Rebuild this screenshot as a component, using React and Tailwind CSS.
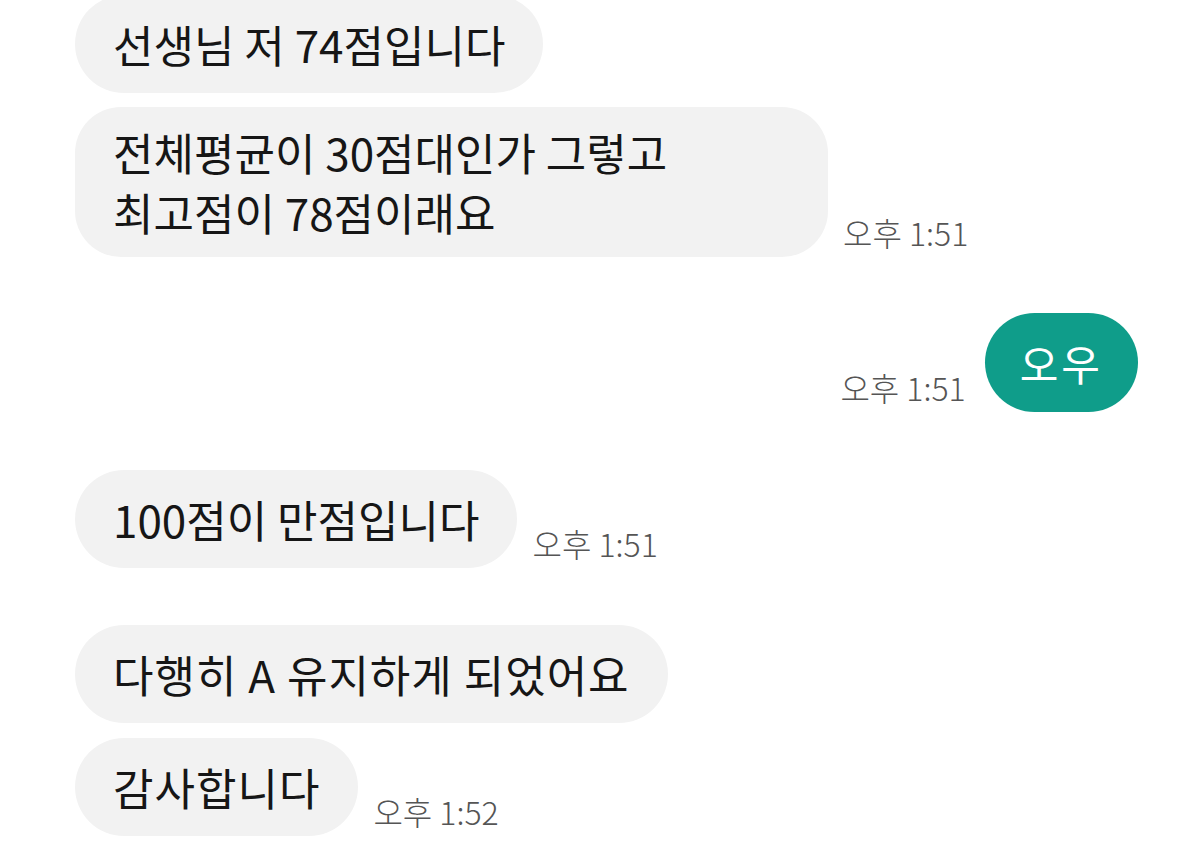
import React from 'react';

const Time = ({ children }) => (
  <span className="mb-[6px] text-[32px] leading-[38px] font-light text-[#555555] whitespace-nowrap">{children}</span>
);

function Bubble({ lines, className = '' }) {
  return (
    <div className={`self-start min-h-[98px] px-[38px] py-[15px] flex flex-col justify-center bg-[#f2f2f2] text-[#161616] text-[44px] leading-[60px] ${className || 'rounded-full'}`}>
      {lines.map((l, i) => (
        <div key={i} className="whitespace-nowrap">{l}</div>
      ))}
    </div>
  );
}

export default function App() {
  const font = { fontFamily: '"Noto Sans CJK KR", "Noto Sans", sans-serif' };
  return (
    <div className="w-[1200px] h-[861px] bg-white overflow-hidden" style={font}>
      <div className="flex flex-col pr-[62px] pl-[75px] -mt-[5px]">
        {/* first group */}
        <div className="flex flex-col gap-[14px]">
          <Bubble lines={['선생님 저 74점입니다']} />
          <div className="flex items-end gap-[15px]">
            <Bubble lines={['전체평균이 30점대인가 그렇고', '최고점이 78점이래요']} className="w-[753px] rounded-[46px]" />
            <Time>오후 1:51</Time>
          </div>
        </div>

        {/* mine */}
        <div className="flex items-end justify-end gap-[19px] mt-[56px]">
          <Time>오후 1:51</Time>
          <div className="h-[99px] px-[35px] flex items-center rounded-full bg-[#0f9d8a] text-white text-[42px] tracking-[3px]">
            오우
          </div>
        </div>

        <div className="flex items-end gap-[15px] mt-[58px]">
          <Bubble lines={['100점이 만점입니다']} />
          <Time>오후 1:51</Time>
        </div>

        <div className="flex flex-col gap-[15px] mt-[57px]">
          <Bubble lines={['다행히 A 유지하게 되었어요']} className="rounded-full tracking-[1px]" />
          <div className="flex items-end gap-[15px]">
            <Bubble lines={['감사합니다']} className="rounded-full tracking-[1px]" />
            <Time>오후 1:52</Time>
          </div>
        </div>
      </div>
    </div>
  );
}
